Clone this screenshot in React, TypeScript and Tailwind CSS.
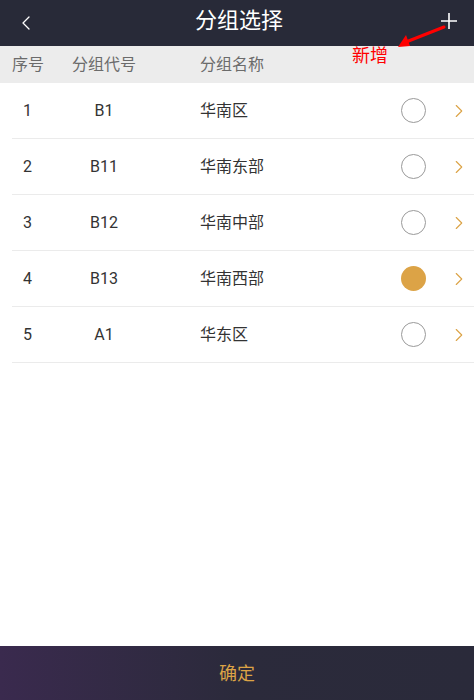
import { ChevronLeft, ChevronRight } from "lucide-react";

type Group = { no: number; code: string; name: string };

const groups: Group[] = [
  { no: 1, code: "B1", name: "华南区" },
  { no: 2, code: "B11", name: "华南东部" },
  { no: 3, code: "B12", name: "华南中部" },
  { no: 4, code: "B13", name: "华南西部" },
  { no: 5, code: "A1", name: "华东区" },
];

const font = { fontFamily: '"Roboto", "Noto Sans CJK SC", sans-serif' };

const App: React.FC = () => {
  const selected = 4;

  return (
    <div className="relative w-[474px] h-[700px] flex flex-col bg-white" style={font}>
      <header className="h-[46px] bg-[#282a38] flex items-center justify-between pl-[14px] pr-[16px] shrink-0">
        <ChevronLeft className="text-white w-[24px] h-[24px]" strokeWidth={1.3} />
        <h1 className="text-white text-[22px] leading-none mt-[-4px]">分组选择</h1>
        <svg width="18" height="18" viewBox="0 0 18 18" className="mt-[-4px]">
          <path d="M9 1v16M1 9h16" stroke="white" strokeWidth="1.6" />
        </svg>
      </header>

      <div className="h-[37px] bg-[#ececec] flex items-center text-[16px] text-[#6b6b6b] shrink-0">
        <span className="w-[60px] pl-[12px]">序号</span>
        <span className="w-[140px] pl-[12px]">分组代号</span>
        <span>分组名称</span>
      </div>

      <ul className="flex-1">
        {groups.map((g) => (
          <li key={g.no} className="h-[56px] ml-[12px] border-b border-[#ebebeb] flex items-center text-[16px] text-[#333]">
            <span className="w-[52px] pl-[11px]">{g.no}</span>
            <span className="w-[80px] text-center">{g.code}</span>
            <span className="ml-[56px] flex-1">{g.name}</span>
            {g.no === selected ? (
              <span className="w-[25px] h-[25px] rounded-full bg-[#dca346]" />
            ) : (
              <span className="w-[25px] h-[25px] rounded-full border border-[#9a9a9a]" />
            )}
            <ChevronRight className="ml-[22px] mr-[4px] w-[22px] h-[22px] text-[#dca346]" strokeWidth={1.2} />
          </li>
        ))}
      </ul>

      <button className="h-[54px] shrink-0 bg-gradient-to-r from-[#3a2a4e] via-[#2b2a3b] to-[#2a2a3a] text-[#dca346] text-[18px]">
        确定
      </button>

      <div className="absolute left-[352px] top-[47px] text-[#ff0000] text-[18px] leading-none">新增</div>
      <svg className="absolute left-[394px] top-[22px]" width="54" height="30" viewBox="0 0 54 30">
        <path d="M50 5 L12 20" stroke="#ff0000" strokeWidth="3" strokeLinecap="round" />
        <path d="M4 25 L12 13 L16 24 Z" fill="#ff0000" />
      </svg>
    </div>
  );
};

export default App;
